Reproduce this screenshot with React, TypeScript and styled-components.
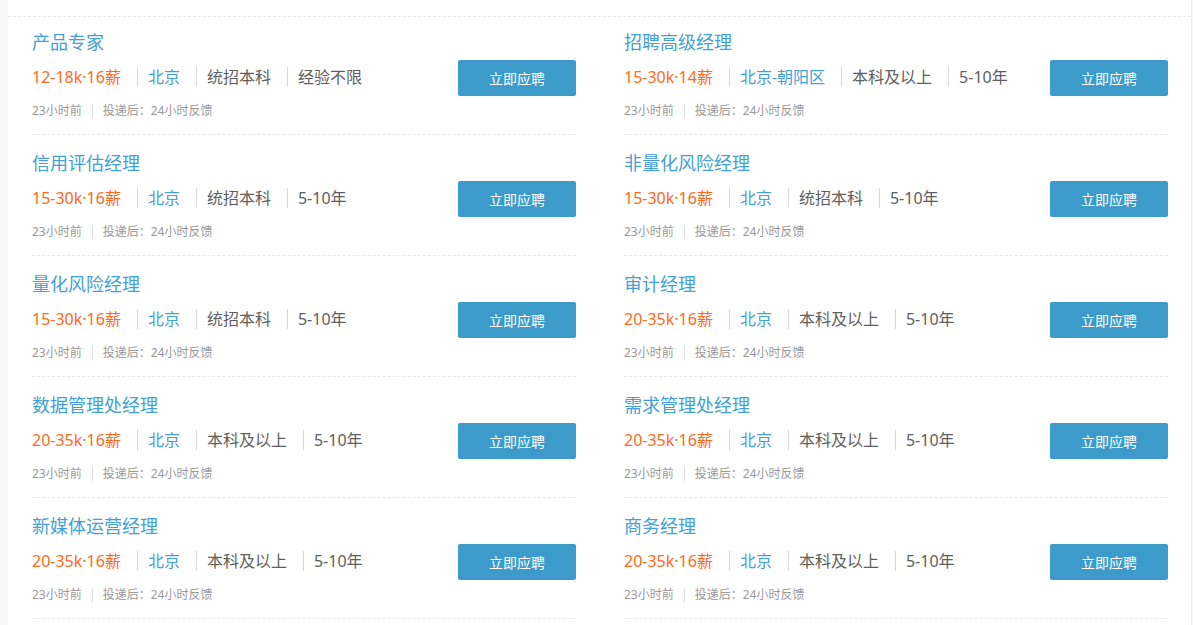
import React from "react"
import styled, { createGlobalStyle } from "styled-components"

interface IJob {
  title: string
  salary: string
  city: string
  education: string
  experience: string
}

const jobs: IJob[] = [
  { title: "产品专家", salary: "12-18k·16薪", city: "北京", education: "统招本科", experience: "经验不限" },
  { title: "招聘高级经理", salary: "15-30k·14薪", city: "北京-朝阳区", education: "本科及以上", experience: "5-10年" },
  { title: "信用评估经理", salary: "15-30k·16薪", city: "北京", education: "统招本科", experience: "5-10年" },
  { title: "非量化风险经理", salary: "15-30k·16薪", city: "北京", education: "统招本科", experience: "5-10年" },
  { title: "量化风险经理", salary: "15-30k·16薪", city: "北京", education: "统招本科", experience: "5-10年" },
  { title: "审计经理", salary: "20-35k·16薪", city: "北京", education: "本科及以上", experience: "5-10年" },
  { title: "数据管理处经理", salary: "20-35k·16薪", city: "北京", education: "本科及以上", experience: "5-10年" },
  { title: "需求管理处经理", salary: "20-35k·16薪", city: "北京", education: "本科及以上", experience: "5-10年" },
  { title: "新媒体运营经理", salary: "20-35k·16薪", city: "北京", education: "本科及以上", experience: "5-10年" },
  { title: "商务经理", salary: "20-35k·16薪", city: "北京", education: "本科及以上", experience: "5-10年" }
]

const GlobalStyle = createGlobalStyle`
  html, body {
    margin: 0;
    padding: 0;
    background: #f6f6f6;
    font-family: "Noto Sans", "Noto Sans CJK SC", sans-serif;
    height: 625px;
    overflow: hidden;
  }
`

const App: React.FC = () => (
  <>
    <GlobalStyle />
    <Page>
      <Panel>
        <PanelTop />
        <JobGrid>
          {jobs.map(job => (
            <JobItem key={job.title}>
              <Info>
                <Title>{job.title}</Title>
                <Tags>
                  <Tag tone="salary">{job.salary}</Tag>
                  <Tag tone="city">{job.city}</Tag>
                  <Tag tone="plain">{job.education}</Tag>
                  <Tag tone="plain">{job.experience}</Tag>
                </Tags>
                <Meta>
                  <MetaItem>23小时前</MetaItem>
                  <MetaItem>投递后：24小时反馈</MetaItem>
                </Meta>
              </Info>
              <ApplyButton>立即应聘</ApplyButton>
            </JobItem>
          ))}
        </JobGrid>
      </Panel>
    </Page>
  </>
)

const Page = styled.div`
  padding-left: 8px;
  width: 1184px;
`

const Panel = styled.div`
  background: #fff;
  border-right: 1px solid #ececec;
  height: 625px;
  overflow: hidden;
`

const PanelTop = styled.div`
  height: 16px;
  border-bottom: 1px dashed #e8e8e8;
`

const JobGrid = styled.div`
  display: grid;
  grid-template-columns: 544px 544px;
  column-gap: 48px;
  padding: 0 24px;
`

const JobItem = styled.div`
  display: flex;
  justify-content: space-between;
  align-items: flex-start;
  padding: 16px 0 14px;
  border-bottom: 1px dashed #e8e8e8;

  &:nth-child(-n + 2) {
    padding-top: 13px;
  }
`

const Info = styled.div`
  display: flex;
  flex-direction: column;
`

const Title = styled.div`
  font-size: 18px;
  line-height: 24px;
  color: #439fd4;
`

const Tags = styled.div`
  display: flex;
  align-items: center;
  margin-top: 11px;
  height: 24px;
`

const toneColors = {
  salary: "#ff6a1c",
  city: "#439fd4",
  plain: "#5e5e5e"
}

const Tag = styled.span<{ tone: keyof typeof toneColors }>`
  font-size: 16px;
  line-height: 24px;
  color: ${p => toneColors[p.tone]};
  padding: 0 16px 0 10px;
  border-left: 1px solid #d9d9d9;
  height: 20px;
  display: flex;
  align-items: center;

  &:first-child {
    border-left: none;
    padding-left: 0;
  }
`

const Meta = styled.div`
  display: flex;
  align-items: center;
  margin-top: 13px;
  height: 18px;
`

const MetaItem = styled.span`
  font-size: 12px;
  color: #999;
  padding: 0 10px 0 10px;
  border-left: 1px solid #ddd;
  line-height: 14px;

  &:first-child {
    border-left: none;
    padding-left: 0;
  }
`

const ApplyButton = styled.button`
  margin-top: 30px;
  width: 118px;
  height: 36px;
  border: none;
  border-radius: 2px;
  background: #3d9bcb;
  color: #fff;
  font-family: inherit;
  font-size: 14px;
  cursor: pointer;
`

export default App
